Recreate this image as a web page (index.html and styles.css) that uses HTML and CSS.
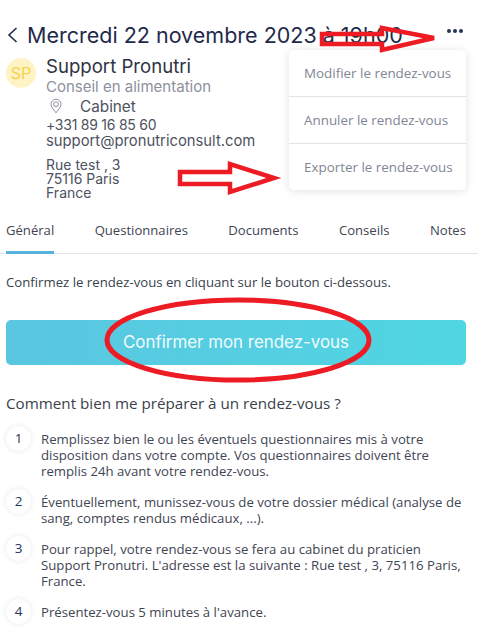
FILE: index.html
```html
<!DOCTYPE html>
<html lang="fr">
<head>
<meta charset="utf-8">
<title>Rendez-vous</title>
<link rel="stylesheet" href="styles.css">
</head>
<body>
<div class="page">
  <header class="head">
    <svg class="back" width="13" height="18" viewBox="0 0 13 18"><path d="M10.5 2 L3 9 L10.5 16" fill="none" stroke="#1f2a4a" stroke-width="1.6"/></svg>
    <h1 class="title">Mercredi 22 novembre 2023 à 19h00</h1>
    <div class="dots"><i></i><i></i><i></i></div>
  </header>
  <section class="info">
    <div class="avatar">SP</div>
    <div class="details">
      <div class="name">Support Pronutri</div>
      <div class="spec">Conseil en alimentation</div>
      <div class="place">
        <svg width="14" height="16" viewBox="0 0 14 16"><path d="M7 14.8 C4.5 11.5 2 9 2 6.2 A5 5 0 0 1 12 6.2 C12 9 9.5 11.5 7 14.8 Z" fill="none" stroke="#8a8f99" stroke-width="1"/><circle cx="7" cy="6.2" r="2.4" fill="none" stroke="#8a8f99" stroke-width="1"/></svg>
        <span>Cabinet</span>
      </div>
      <div class="contact phone">+331 89 16 85 60</div>
      <div class="contact">support@pronutriconsult.com</div>
      <div class="address">Rue test , 3<br>75116 Paris<br>France</div>
    </div>
  </section>
  <nav class="tabs">
    <a class="tab active">Général</a>
    <a class="tab">Questionnaires</a>
    <a class="tab">Documents</a>
    <a class="tab">Conseils</a>
    <a class="tab">Notes</a>
  </nav>
  <p class="lead">Confirmez le rendez-vous en cliquant sur le bouton ci-dessous.</p>
  <button class="confirm">Confirmer mon rendez-vous</button>
  <h2 class="sub">Comment bien me préparer à un rendez-vous ?</h2>
  <ol class="steps">
    <li class="step"><span class="num">1</span><p>Remplissez bien le ou les éventuels questionnaires mis à votre disposition dans votre compte. Vos questionnaires doivent être remplis 24h avant votre rendez-vous.</p></li>
    <li class="step"><span class="num">2</span><p>Éventuellement, munissez-vous de votre dossier médical (analyse de sang, comptes rendus médicaux, ...).</p></li>
    <li class="step"><span class="num">3</span><p>Pour rappel, votre rendez-vous se fera au cabinet du praticien Support Pronutri. L'adresse est la suivante : Rue test , 3, 75116 Paris, France.</p></li>
    <li class="step"><span class="num">4</span><p>Présentez-vous 5 minutes à l'avance.</p></li>
  </ol>
</div>
<div class="menu">
  <a class="item">Modifier le rendez-vous</a>
  <a class="item">Annuler le rendez-vous</a>
  <a class="item">Exporter le rendez-vous</a>
</div>
<svg class="marks" width="478" height="643" viewBox="0 0 478 643">
  <path d="M322 34 H382 V28 L434 38 L382 50 V44 H322 Z" fill="none" stroke="#ed1c24" stroke-width="4.5"/>
  <path d="M180 172 H230 V164 L274 178 L230 192 V184 H180 Z" fill="none" stroke="#ed1c24" stroke-width="4.5"/>
  <ellipse cx="238" cy="340" rx="131" ry="40" fill="none" stroke="#ed1c24" stroke-width="5"/>
</svg>
</body>
</html>
```
FILE: styles.css
```css
* { box-sizing: border-box; }
html, body { margin: 0; padding: 0; background: #fff; }
body { width: 478px; height: 643px; overflow: hidden; position: relative; font-family: "Open Sans", sans-serif; color: #3a3f4c; }
.page { padding: 22px 12px 0 6px; }
.head { display: flex; align-items: center; height: 26px; }
.back { flex: none; margin-right: 8px; }
.title { margin: 0; flex: 1; font: 400 21.5px/26px Inter, sans-serif; color: #1f2a4a; white-space: nowrap; }
.dots { display: flex; gap: 2px; margin-right: 3px; margin-top: -8px; }
.dots i { width: 4px; height: 4px; border-radius: 50%; background: #26345a; }
.info { display: flex; gap: 10px; margin-top: 6px; }
.avatar { width: 30px; height: 30px; border-radius: 50%; background: #fdf3c4; color: #f8d24a; font: 400 16px/30px Inter, sans-serif; text-align: center; flex: none; margin-top: 4px; }
.details { font-family: Inter, sans-serif; font-size: 14.8px; color: #4d5260; }
.name { font-size: 18.6px; line-height: 24px; color: #2f3342; }
.spec { font-size: 15px; line-height: 17px; color: #8c919c; }
.place { display: flex; align-items: center; gap: 17px; height: 22px; padding-left: 3px; font-size: 15.3px; }
.contact { line-height: 16px; }
.phone { font-size: 14px; letter-spacing: -.25px; }
.address { margin-top: 9px; font-size: 14px; line-height: 14px; }
.tabs { display: flex; justify-content: space-between; margin: 20px -12px 0 -6px; padding: 0 12px 0 6px; border-bottom: 1px solid #e2e4e8; height: 34px; }
.tab { font-size: 13.1px; line-height: 20px; color: #3f4552; height: 34px; }
.tab.active { border-bottom: 3px solid #57b3de; }
.lead { margin: 19px 0 0; font-size: 13.2px; line-height: 18px; color: #3a3f4c; }
.confirm { display: block; width: 460px; height: 45px; margin-top: 29px; border: 0; border-radius: 5px; background: linear-gradient(90deg, #5ac6e1, #50d6e2); color: #f2fbfd; font: 400 16.9px/45px Inter, sans-serif; text-align: center; padding: 0; }
.sub { margin: 28px 0 0; font-size: 15.2px; font-weight: 400; line-height: 20px; color: #3a3f4c; }
.steps { list-style: none; margin: 13px 0 0; padding: 0; display: flex; flex-direction: column; gap: 10px; }
.step { display: flex; gap: 10px; }
.step p { margin: 0; padding-top: 5px; font-size: 13.2px; line-height: 16px; color: #3f4552; }
.num { flex: none; width: 25px; height: 25px; border-radius: 50%; background: #fff; box-shadow: 0 0 5px rgba(40,50,80,.12); text-align: center; font-size: 13.5px; line-height: 25px; color: #28345a; }
.menu { position: absolute; left: 289px; top: 50px; width: 177px; height: 140px; background: #fff; border-radius: 5px; box-shadow: 0 1px 8px rgba(40,50,80,.14); display: flex; flex-direction: column; }
.item { flex: 1; padding-left: 15px; font-size: 13.4px; display: flex; align-items: center; color: #7f8694; border-bottom: 1px solid #e2e4e8; }
.item:last-child { border-bottom: 0; }
.marks { position: absolute; left: 0; top: 0; pointer-events: none; }
```
